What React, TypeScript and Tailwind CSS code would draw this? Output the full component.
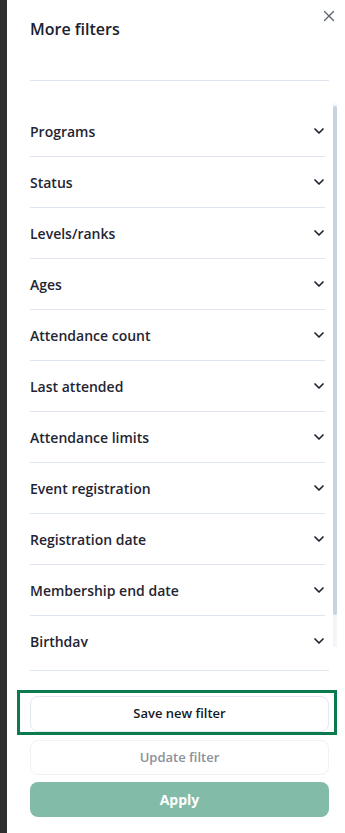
import React from 'react';
import { ChevronDown, X } from 'lucide-react';

const FILTERS = [
  'Programs',
  'Status',
  'Levels/ranks',
  'Ages',
  'Attendance count',
  'Last attended',
  'Attendance limits',
  'Event registration',
  'Registration date',
  'Membership end date',
  'Birthday',
];

export default function App() {
  return (
    <div
      className="flex h-[833px] w-[345px] overflow-hidden bg-white"
      style={{ fontFamily: '"Open Sans", "Noto Sans", sans-serif' }}
    >
      {/* backdrop strip */}
      <div className="w-[7px] flex-shrink-0 bg-[#2f2f2f]" />

      <div className="relative flex flex-1 flex-col bg-white">
        <button className="absolute right-[7px] top-[7px] text-[#5d6270]">
          <X size={18} strokeWidth={1.8} />
        </button>

        {/* Header */}
        <div className="h-[80px] pl-[23px] pt-[17px]">
          <h2 className="text-[16px] font-semibold leading-6 text-[#1b2130]">More filters</h2>
        </div>
        <div className="ml-[23px] mr-[16px] h-px bg-[#dfe5ee]" />

        {/* Filter list */}
        <div className="relative h-[566px] overflow-hidden pl-[23px] pr-[20px] pt-[25px]">
          {FILTERS.map((f) => (
            <div
              key={f}
              className="flex h-[51px] items-center justify-between border-b border-[#dfe5ee]"
            >
              <span className="text-[14px] font-semibold text-[#1f2533]">{f}</span>
              <ChevronDown size={16} strokeWidth={2.6} className="-mr-[2px] text-[#1f2533]" />
            </div>
          ))}
          {/* scrollbar */}
          <div className="absolute right-[8px] top-[22px] h-[560px] w-[4px] rounded-full bg-[#f3f5f8]" />
          <div className="absolute right-[8px] top-[25px] h-[509px] w-[4px] rounded-full bg-[#c9d3df]" />
        </div>

        <div className="h-[23px]" />
        <div className="ml-[23px] mr-[16px] h-px bg-[#dfe5ee]" />

        {/* Footer */}
        <div className="flex flex-col pl-[23px] pr-[16px] pt-[25px]">
          <div className="relative">
            <div className="pointer-events-none absolute -bottom-[3px] -left-[13px] -right-[8px] -top-[6px] border-[3px] border-[#0b7a4c]" />
            <button className="flex h-[36px] w-full items-center justify-center rounded-lg border border-[#e3e8f0] bg-white text-[13px] font-semibold text-[#15191f]">
              Save new filter
            </button>
          </div>
          <button className="mt-[8px] flex h-[35px] w-full items-center justify-center rounded-lg border border-[#f0f2f5] bg-white text-[13px] font-semibold text-[#8b9099]">
            Update filter
          </button>
          <button className="mt-[7px] flex h-[35px] w-full items-center justify-center rounded-lg bg-[#82bba8] text-[14px] font-bold text-white">
            Apply
          </button>
        </div>
      </div>
    </div>
  );
}
